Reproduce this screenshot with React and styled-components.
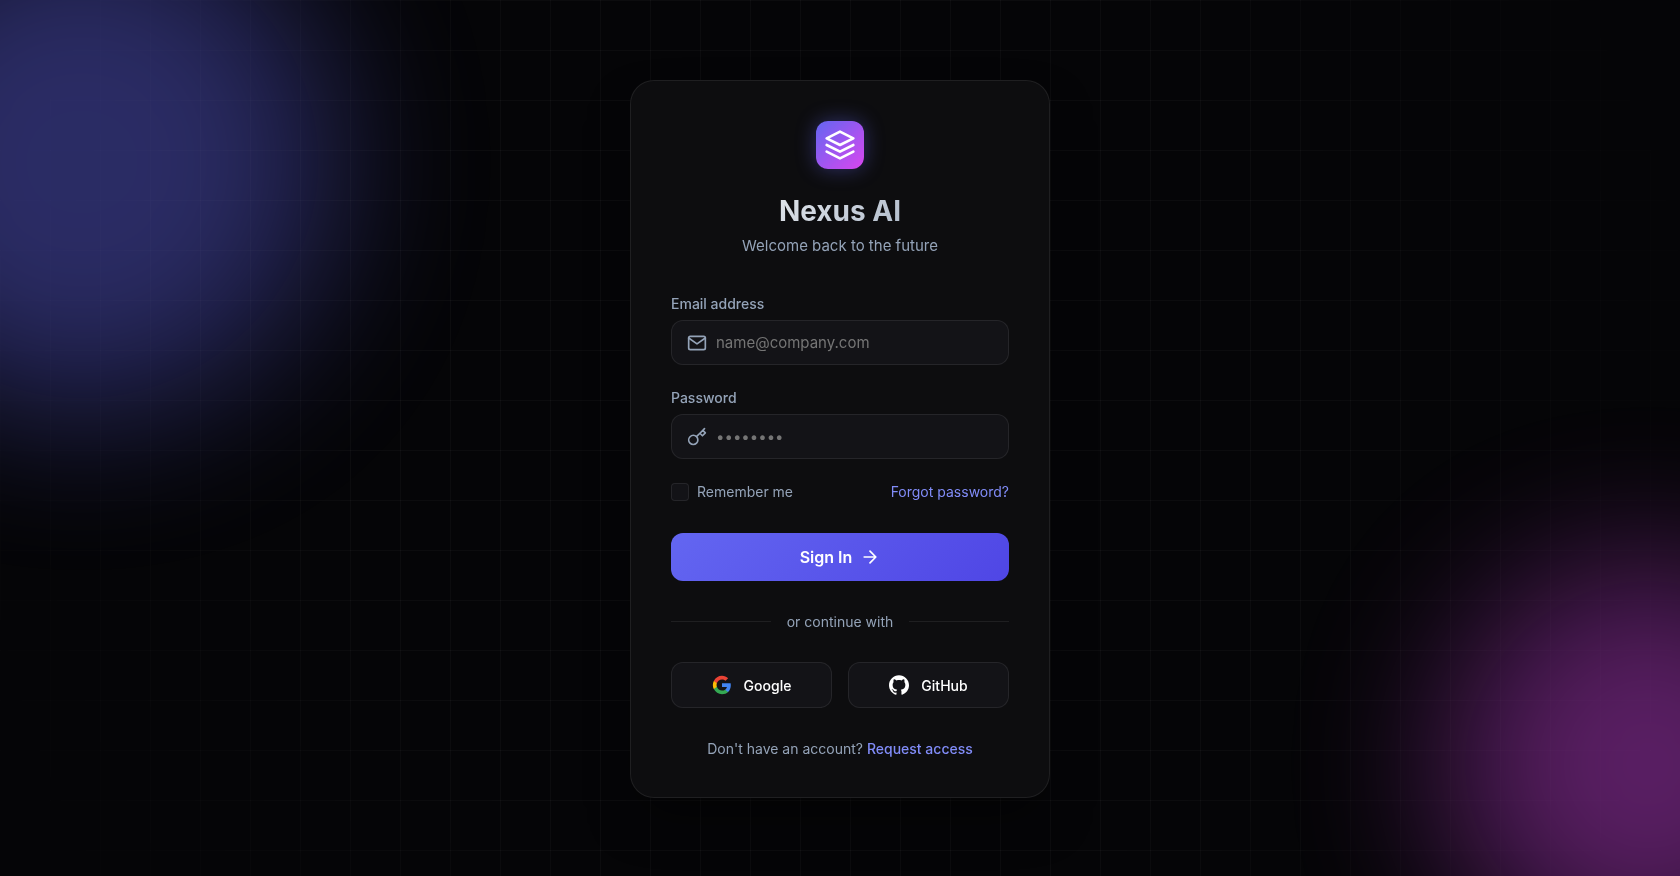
import { useState } from "react";
import styled, { createGlobalStyle } from "styled-components";

const App = () => {
  const [email, setEmail] = useState("");
  const [password, setPassword] = useState("");
  const [remember, setRemember] = useState(false);

  const handleSubmit = (e) => {
    e.preventDefault();
  };

  return (
    <>
      <GlobalStyle />
      <Page>
        <Backdrop aria-hidden="true">
          <BlueOrb />
          <PinkOrb />
          <GridLines />
        </Backdrop>
        <Card>
          <Header>
            <Logo>
              <svg width="32" height="32" viewBox="0 0 24 24">
                <path d="M12 2L2 7l10 5 10-5-10-5z" />
                <path d="M2 17l10 5 10-5" />
                <path d="M2 12l10 5 10-5" />
              </svg>
            </Logo>
            <Title>Nexus AI</Title>
            <Subtitle>Welcome back to the future</Subtitle>
          </Header>

          <Form onSubmit={handleSubmit}>
            <Field>
              <Label htmlFor="email">Email address</Label>
              <InputBox>
                <FieldIcon viewBox="0 0 24 24">
                  <path d="M4 4h16c1.1 0 2 .9 2 2v12c0 1.1-.9 2-2 2H4c-1.1 0-2-.9-2-2V6c0-1.1.9-2 2-2z" />
                  <polyline points="22,6 12,13 2,6" />
                </FieldIcon>
                <Input
                  id="email"
                  type="email"
                  placeholder="name@company.com"
                  value={email}
                  onChange={(e) => setEmail(e.target.value)}
                />
              </InputBox>
            </Field>

            <Field>
              <Label htmlFor="password">Password</Label>
              <InputBox>
                <FieldIcon viewBox="0 0 24 24">
                  <path d="M21 2l-2 2m-7.61 7.61a5.5 5.5 0 1 1-7.778 7.778 5.5 5.5 0 0 1 7.777-7.777zm0 0L15.5 7.5m0 0l3 3L22 7l-3-3m-3.5 3.5L19 4" />
                </FieldIcon>
                <Input
                  id="password"
                  type="password"
                  placeholder="••••••••"
                  value={password}
                  onChange={(e) => setPassword(e.target.value)}
                />
              </InputBox>
            </Field>

            <Options>
              <Remember>
                <Checkbox
                  type="checkbox"
                  checked={remember}
                  onChange={(e) => setRemember(e.target.checked)}
                />
                Remember me
              </Remember>
              <TextLink href="#forgot">Forgot password?</TextLink>
            </Options>

            <SubmitButton type="submit">
              Sign In
              <svg width="20" height="20" viewBox="0 0 24 24">
                <path d="M5 12h14M12 5l7 7-7 7" />
              </svg>
            </SubmitButton>
          </Form>

          <Divider>or continue with</Divider>

          <Socials>
            <SocialButton type="button">
              <svg width="20" height="20" viewBox="0 0 24 24">
                <path
                  fill="#4285F4"
                  d="M22.56 12.25c0-.78-.07-1.53-.2-2.25H12v4.26h5.92c-.26 1.37-1.04 2.53-2.21 3.31v2.77h3.57c2.08-1.92 3.28-4.74 3.28-8.09z"
                />
                <path
                  fill="#34A853"
                  d="M12 23c2.97 0 5.46-.98 7.28-2.66l-3.57-2.77c-.98.66-2.23 1.06-3.71 1.06-2.86 0-5.29-1.93-6.16-4.53H2.18v2.84C3.99 20.53 7.7 23 12 23z"
                />
                <path
                  fill="#FBBC05"
                  d="M5.84 14.09c-.22-.66-.35-1.36-.35-2.09s.13-1.43.35-2.09V7.07H2.18C1.43 8.55 1 10.22 1 12s.43 3.45 1.18 4.93l2.85-2.22.81-.62z"
                />
                <path
                  fill="#EA4335"
                  d="M12 5.38c1.62 0 3.06.56 4.21 1.64l3.15-3.15C17.45 2.09 14.97 1 12 1 7.7 1 3.99 3.47 2.18 7.07l3.66 2.84c.87-2.6 3.3-4.53 6.16-4.53z"
                />
              </svg>
              Google
            </SocialButton>
            <SocialButton type="button">
              <svg width="20" height="20" viewBox="0 0 24 24" fill="currentColor">
                <path d="M12 .297c-6.63 0-12 5.373-12 12 0 5.303 3.438 9.8 8.205 11.385.6.113.82-.258.82-.577 0-.285-.01-1.04-.015-2.04-3.338.724-4.042-1.61-4.042-1.61C4.422 18.07 3.633 17.7 3.633 17.7c-1.087-.744.084-.729.084-.729 1.205.084 1.838 1.236 1.838 1.236 1.07 1.835 2.809 1.305 3.495.998.108-.776.417-1.305.76-1.605-2.665-.3-5.466-1.332-5.466-5.93 0-1.31.465-2.38 1.235-3.22-.135-.303-.54-1.523.105-3.176 0 0 1.005-.322 3.3 1.23.96-.267 1.98-.399 3-.405 1.02.006 2.04.138 3 .405 2.28-1.552 3.285-1.23 3.285-1.23.645 1.653.24 2.873.12 3.176.765.84 1.23 1.91 1.23 3.22 0 4.61-2.805 5.625-5.475 5.92.42.36.81 1.096.81 2.22 0 1.606-.015 2.896-.015 3.286 0 .315.21.69.825.57C20.565 22.092 24 17.592 24 12.297c0-6.627-5.373-12-12-12" />
              </svg>
              GitHub
            </SocialButton>
          </Socials>

          <Footer>
            Don't have an account?{" "}
            <TextLink href="#request" $strong>
              Request access
            </TextLink>
          </Footer>
        </Card>
      </Page>
    </>
  );
};

export default App;

const GlobalStyle = createGlobalStyle`
  * {
    box-sizing: border-box;
    margin: 0;
    padding: 0;
  }

  body {
    background: #050507;
    color: #fff;
    font-family: Inter, "Liberation Sans", sans-serif;
  }

  button,
  input {
    font-family: inherit;
  }
`;

const Page = styled.main`
  position: relative;
  min-height: 100vh;
  display: flex;
  align-items: center;
  justify-content: center;
  padding: 22px 20px 20px;
`;

const Backdrop = styled.div`
  position: fixed;
  inset: 0;
  overflow: hidden;
  pointer-events: none;
`;

const Orb = styled.div`
  position: absolute;
  border-radius: 50%;
  filter: blur(80px);
  opacity: 0.4;
`;

const BlueOrb = styled(Orb)`
  top: -10%;
  left: -10%;
  width: 500px;
  height: 500px;
  background: #6366f1;
`;

const PinkOrb = styled(Orb)`
  right: -10%;
  bottom: -10%;
  width: 400px;
  height: 400px;
  background: #d946ef;
`;

const GridLines = styled.div`
  position: absolute;
  inset: 0;
  background-image: linear-gradient(rgba(255, 255, 255, 0.03) 1px, transparent 1px),
    linear-gradient(90deg, rgba(255, 255, 255, 0.03) 1px, transparent 1px);
  background-size: 50px 50px;
  mask-image: radial-gradient(circle at center, black 50%, transparent 100%);
`;

const Card = styled.section`
  position: relative;
  width: 100%;
  max-width: 420px;
  padding: 40px;
  background: #0d0d0f;
  border: 1px solid rgba(255, 255, 255, 0.08);
  border-radius: 24px;
  box-shadow: 0 25px 50px -12px rgba(0, 0, 0, 0.5);
`;

const Header = styled.header`
  display: flex;
  flex-direction: column;
  align-items: center;
  margin-bottom: 40px;
`;

const Logo = styled.div`
  display: flex;
  align-items: center;
  justify-content: center;
  width: 48px;
  height: 48px;
  margin-bottom: 24px;
  border-radius: 12px;
  background: linear-gradient(135deg, #6366f1, #d946ef);
  box-shadow: 0 0 20px rgba(99, 102, 241, 0.4);

  svg {
    fill: none;
    stroke: #fff;
    stroke-width: 2;
    stroke-linecap: round;
    stroke-linejoin: round;
  }
`;

const Title = styled.h1`
  width: 100%;
  margin-bottom: 8px;
  font-size: 28px;
  font-weight: 700;
  line-height: 36px;
  text-align: center;
  background: linear-gradient(135deg, #fff, #94a3b8);
  background-clip: text;
  -webkit-text-fill-color: transparent;
`;

const Subtitle = styled.p`
  font-size: 15px;
  line-height: 18px;
  color: #94a3b8;
`;

const Form = styled.form`
  display: flex;
  flex-direction: column;
  gap: 24px;
`;

const Field = styled.div`
  display: flex;
  flex-direction: column;
  gap: 8px;
`;

const Label = styled.label`
  font-size: 14px;
  font-weight: 500;
  line-height: 17px;
  color: #94a3b8;
`;

const InputBox = styled.div`
  display: flex;
  align-items: center;
  gap: 9px;
  height: 45px;
  padding: 0 15px;
  background: #131317;
  border: 1px solid rgba(255, 255, 255, 0.08);
  border-radius: 12px;

  &:focus-within {
    border-color: #6366f1;
  }
`;

const FieldIcon = styled.svg`
  flex: none;
  width: 20px;
  height: 20px;
  fill: none;
  stroke: #94a3b8;
  stroke-width: 2;
  stroke-linecap: round;
  stroke-linejoin: round;
`;

const Input = styled.input`
  flex: 1;
  min-width: 0;
  border: none;
  outline: none;
  background: transparent;
  color: #fff;
  font-size: 15px;

  &::placeholder {
    color: #757575;
  }
`;

const Options = styled.div`
  display: flex;
  align-items: center;
  justify-content: space-between;
  margin-bottom: 8px;
  font-size: 14px;
  line-height: 18px;
`;

const Remember = styled.label`
  display: flex;
  align-items: center;
  gap: 8px;
  color: #94a3b8;
  cursor: pointer;
`;

const Checkbox = styled.input`
  appearance: none;
  width: 18px;
  height: 18px;
  background: #131317;
  border: 1px solid rgba(255, 255, 255, 0.08);
  border-radius: 4px;
  cursor: pointer;

  &:checked {
    background: #6366f1;
    border-color: #6366f1;
  }
`;

const TextLink = styled.a`
  color: #818cf8;
  font-weight: ${({ $strong }) => ($strong ? 500 : 400)};
  text-decoration: none;

  &:hover {
    text-decoration: underline;
  }
`;

const SubmitButton = styled.button`
  display: flex;
  align-items: center;
  justify-content: center;
  gap: 8px;
  height: 48px;
  border: none;
  border-radius: 12px;
  background: linear-gradient(135deg, #6366f1, #4f46e5);
  color: #fff;
  font-size: 16px;
  font-weight: 600;
  cursor: pointer;

  svg {
    fill: none;
    stroke: currentColor;
    stroke-width: 2;
    stroke-linecap: round;
    stroke-linejoin: round;
  }
`;

const Divider = styled.div`
  display: flex;
  align-items: center;
  gap: 16px;
  margin: 32px 0;
  font-size: 14px;
  line-height: 17px;
  color: #94a3b8;

  &::before,
  &::after {
    content: "";
    flex: 1;
    height: 1px;
    background: rgba(255, 255, 255, 0.08);
  }
`;

const Socials = styled.div`
  display: grid;
  grid-template-columns: 1fr 1fr;
  gap: 16px;
`;

const SocialButton = styled.button`
  display: flex;
  align-items: center;
  justify-content: center;
  gap: 12px;
  height: 46px;
  background: #131317;
  border: 1px solid rgba(255, 255, 255, 0.08);
  border-radius: 12px;
  color: #fff;
  font-size: 14px;
  font-weight: 500;
  cursor: pointer;
`;

const Footer = styled.p`
  margin-top: 32px;
  font-size: 14px;
  line-height: 17px;
  text-align: center;
  color: #94a3b8;
`;
